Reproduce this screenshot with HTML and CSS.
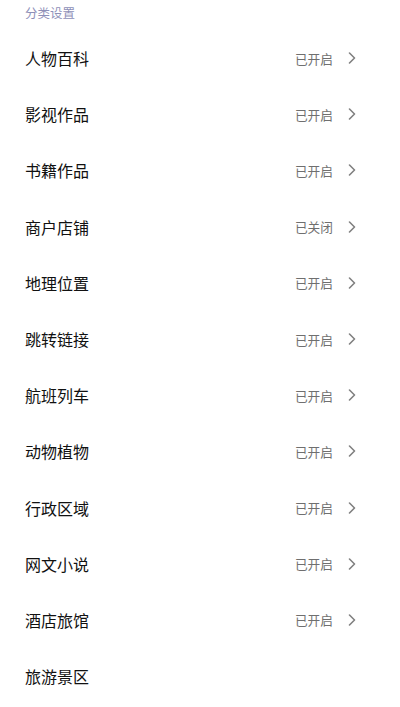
FILE: index.html
```html
<!DOCTYPE html>
<html lang="zh-CN">
<head>
  <meta charset="UTF-8" />
  <meta name="viewport" content="width=device-width, initial-scale=1.0" />
  <title>分类设置</title>
  <link rel="stylesheet" href="styles.css">
</head>
<body>

  <div class="titulo">分类设置</div>

  <ul class="lista">
    <li class="item"><span class="nome">人物百科</span><span class="estado">已开启</span><svg class="seta" viewBox="0 0 8 12"><path d="M1.5 1 L6.5 6 L1.5 11" /></svg></li>
    <li class="item"><span class="nome">影视作品</span><span class="estado">已开启</span><svg class="seta" viewBox="0 0 8 12"><path d="M1.5 1 L6.5 6 L1.5 11" /></svg></li>
    <li class="item"><span class="nome">书籍作品</span><span class="estado">已开启</span><svg class="seta" viewBox="0 0 8 12"><path d="M1.5 1 L6.5 6 L1.5 11" /></svg></li>
    <li class="item"><span class="nome">商户店铺</span><span class="estado">已关闭</span><svg class="seta" viewBox="0 0 8 12"><path d="M1.5 1 L6.5 6 L1.5 11" /></svg></li>
    <li class="item"><span class="nome">地理位置</span><span class="estado">已开启</span><svg class="seta" viewBox="0 0 8 12"><path d="M1.5 1 L6.5 6 L1.5 11" /></svg></li>
    <li class="item"><span class="nome">跳转链接</span><span class="estado">已开启</span><svg class="seta" viewBox="0 0 8 12"><path d="M1.5 1 L6.5 6 L1.5 11" /></svg></li>
    <li class="item"><span class="nome">航班列车</span><span class="estado">已开启</span><svg class="seta" viewBox="0 0 8 12"><path d="M1.5 1 L6.5 6 L1.5 11" /></svg></li>
    <li class="item"><span class="nome">动物植物</span><span class="estado">已开启</span><svg class="seta" viewBox="0 0 8 12"><path d="M1.5 1 L6.5 6 L1.5 11" /></svg></li>
    <li class="item"><span class="nome">行政区域</span><span class="estado">已开启</span><svg class="seta" viewBox="0 0 8 12"><path d="M1.5 1 L6.5 6 L1.5 11" /></svg></li>
    <li class="item"><span class="nome">网文小说</span><span class="estado">已开启</span><svg class="seta" viewBox="0 0 8 12"><path d="M1.5 1 L6.5 6 L1.5 11" /></svg></li>
    <li class="item"><span class="nome">酒店旅馆</span><span class="estado">已开启</span><svg class="seta" viewBox="0 0 8 12"><path d="M1.5 1 L6.5 6 L1.5 11" /></svg></li>
    <li class="item"><span class="nome">旅游景区</span></li>
  </ul>

</body>
</html>
```

FILE: styles.css
```css
body {
  margin: 0;
  background: #fff;
  font-family: "Noto Sans CJK SC", "Noto Sans", sans-serif;
  overflow: hidden;
}

.titulo {
  padding: 4px 25px 8px;
  height: 18px;
  line-height: 18px;
  font-size: 12.5px;
  color: #8e90b8;
}

.lista {
  list-style: none;
  margin: 0;
  padding: 0;
}

.item {
  display: flex;
  align-items: center;
  height: 56.2px;
  padding: 0 44px 0 25px;
}

.nome {
  flex: 1;
  font-size: 16px;
  color: #111;
}

.estado {
  font-size: 12.7px;
  color: #6f6f6f;
  margin-right: 15px;
}

.seta {
  width: 8px;
  height: 12px;
  fill: none;
  stroke: #808080;
  stroke-width: 1.6;
  stroke-linecap: round;
  stroke-linejoin: round;
}
```
